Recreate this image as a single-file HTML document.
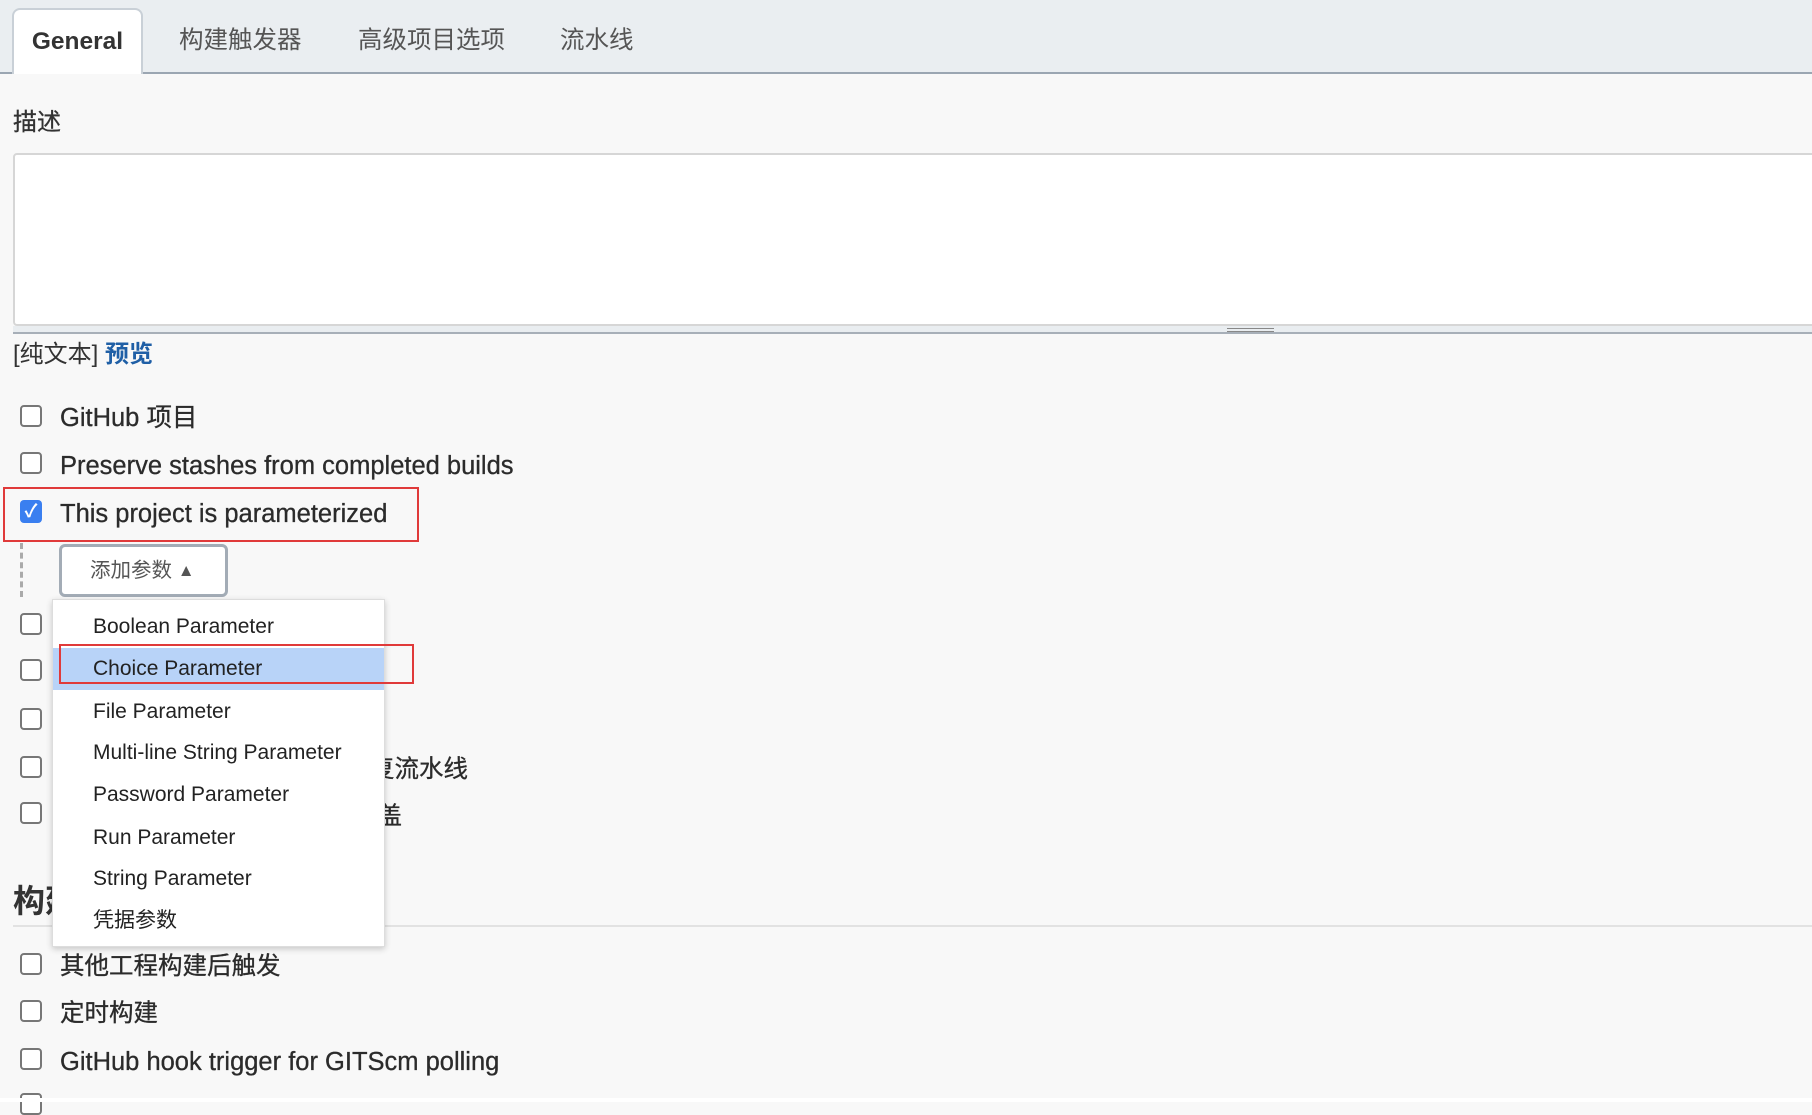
<!DOCTYPE html>
<html><head><meta charset="utf-8"><style>
*{box-sizing:border-box;margin:0;padding:0}
body{width:1812px;height:1102px;background:#f8f8f8;font-family:"Liberation Sans","Noto Sans CJK SC",sans-serif;color:#333;position:relative;overflow:hidden}
.abs{position:absolute}
.tabbar{left:0;top:0;width:1812px;height:74px;background:#eaeef1;border-bottom:2px solid #9ba6b2}
.tab{position:absolute;top:0;height:72px;line-height:82px;font-size:24.5px;color:#555}
.active{left:12px;top:8px;width:131px;height:66px;background:#fff;border:2px solid #c9d0d7;border-bottom:none;border-radius:8px 8px 0 0;text-align:center;line-height:64px;font-weight:bold;color:#333}
.cb{position:absolute;left:20px;width:22px;height:22px;border:2px solid #777;border-radius:4px;background:#fff}
.lbl{position:absolute;left:60px;font-size:25.5px;color:#2b2b2b;line-height:28px;-webkit-text-stroke:0.3px #2b2b2b}
.cj{font-size:24.5px}
.menu{left:52px;top:599px;width:333px;height:348px;background:#fff;border:1px solid #ddd;box-shadow:0 2px 6px rgba(0,0,0,.2)}
.item{position:absolute;left:40px;font-size:21px;color:#222;line-height:24px}
</style></head><body>
<div class="abs tabbar">
<div class="tab active">General</div>
<div class="tab" style="left:179px">构建触发器</div>
<div class="tab" style="left:358px">高级项目选项</div>
<div class="tab" style="left:560px">流水线</div>
</div>
<div class="abs" style="left:13px;top:102px;font-size:24px;color:#333;-webkit-text-stroke:0.3px #333">描述</div>
<div class="abs" style="left:13px;top:153px;width:1820px;height:173px;background:#fff;border:2px solid #d6d6d6;border-radius:4px"></div>
<div class="abs" style="left:13px;top:326px;width:1820px;height:8px;background:#e9edf0;border-bottom:2px solid #a7afb8"></div>
<div class="abs" style="left:1227px;top:328px;width:47px;height:4px;border-top:1px solid #888;border-bottom:1px solid #888"></div>
<div class="abs" style="left:13px;top:334px;font-size:24px;color:#333">[纯文本] <span style="color:#1f5fa6;font-weight:bold">预览</span></div>

<div class="cb" style="top:405px"></div><div class="lbl" style="top:404px">GitHub 项目</div>
<div class="cb" style="top:452px"></div><div class="lbl" style="top:452px">Preserve stashes from completed builds</div>
<div class="abs" style="left:20px;top:500px;width:22px;height:23px;background:#3a7ff0;border-radius:4px;color:#fff;font-size:18px;line-height:23px;text-align:center;font-weight:bold">✓</div>
<div class="lbl" style="top:500px">This project is parameterized</div>
<div class="abs" style="left:3px;top:487px;width:416px;height:55px;border:2px solid #e03a3a"></div>

<div class="abs" style="left:20px;top:543px;height:54px;border-left:3px dashed #aaa"></div>
<div class="abs" style="left:59px;top:544px;width:169px;height:53px;border:3px solid #a3acb6;border-radius:6px;background:#fff;font-size:20.5px;color:#555;line-height:47px;padding-left:28px">添加参数 <span style="font-size:17px;vertical-align:1px">▲</span></div>

<div class="cb" style="top:613px"></div>
<div class="cb" style="top:659px"></div>
<div class="cb" style="top:708px"></div>
<div class="cb" style="top:756px"></div><div class="lbl cj" style="top:756px;left:auto;right:1344px">如果控制器重启则不允许恢复流水线</div>
<div class="cb" style="top:802px"></div><div class="lbl cj" style="top:803px;left:auto;right:1410px">用于构建的覆盖盖</div>

<div class="abs" style="left:13px;top:876px;font-size:32px;font-weight:bold;color:#333">构建触发器</div>
<div class="abs" style="left:13px;top:925px;width:1800px;height:2px;background:#e2e2e2"></div>

<div class="abs menu">
<div class="abs" style="left:0;top:48px;width:331px;height:42px;background:#b8d3f8"></div>
<div class="item" style="top:15px">Boolean Parameter</div>
<div class="item" style="top:57px">Choice Parameter</div>
<div class="item" style="top:100px">File Parameter</div>
<div class="item" style="top:141px">Multi-line String Parameter</div>
<div class="item" style="top:183px">Password Parameter</div>
<div class="item" style="top:226px">Run Parameter</div>
<div class="item" style="top:267px">String Parameter</div>
<div class="item" style="top:309px">凭据参数</div>
</div>
<div class="abs" style="left:59px;top:644px;width:355px;height:40px;border:2px solid #e03a3a"></div>

<div class="cb" style="top:953px"></div><div class="lbl cj" style="top:953px">其他工程构建后触发</div>
<div class="cb" style="top:1000px"></div><div class="lbl cj" style="top:1000px">定时构建</div>
<div class="cb" style="top:1048px"></div><div class="lbl" style="top:1048px">GitHub hook trigger for GITScm polling</div>
<div class="cb" style="top:1093px"></div>
<div class="abs" style="left:0;top:1098px;width:1812px;height:4px;background:#fff"></div>
</body></html>
